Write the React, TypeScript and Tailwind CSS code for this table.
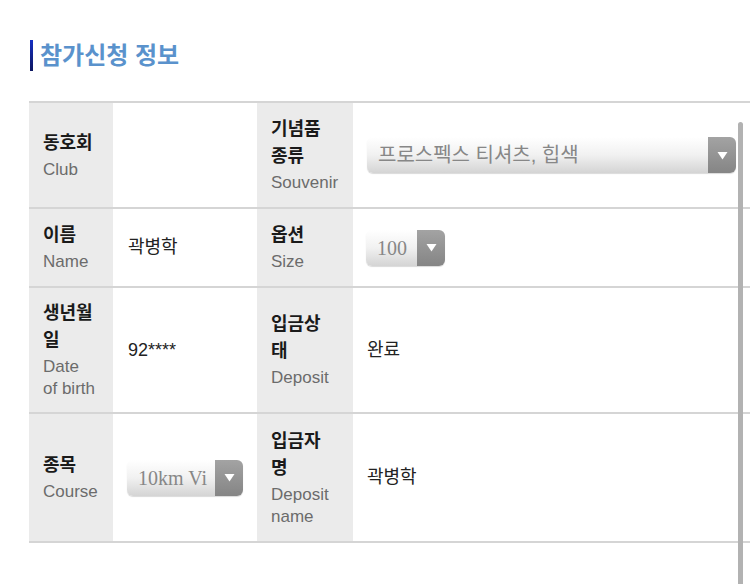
import React from "react";

const ko = { fontFamily: '"Liberation Sans", "Noto Sans CJK KR", sans-serif' };

function Label({ lines, en }: { lines: string[]; en: string[] }) {
  return (
    <div className="flex flex-col justify-center bg-[#ebebeb] pl-[14px] pr-[10px] border-b-2 border-[#d5d5d5] whitespace-nowrap">
      {lines.map((l) => (
        <div key={l} className="text-[18px] leading-[27px] font-bold text-[#1a1a1a]">
          {l}
        </div>
      ))}
      <div className="mt-[2px]">
        {en.map((e) => (
          <div key={e} className="text-[17px] leading-[22px] text-[#6b6b6b]">
            {e}
          </div>
        ))}
      </div>
    </div>
  );
}

function Value({ children, pad = "pl-[15px]" }: { children?: React.ReactNode; pad?: string }) {
  return (
    <div className={`flex items-center ${pad} border-b-2 border-[#d5d5d5] text-[18px] text-[#222]`}>
      {children}
    </div>
  );
}

function Select({ text, width, serif }: { text: string; width: string; serif?: boolean }) {
  return (
    <div className={`flex h-[36px] ${width} rounded-[6px] overflow-hidden shadow-[0_1px_1px_rgba(0,0,0,0.15)]`}>
      <div
        className="flex-1 min-w-0 flex items-center pl-[11px] overflow-hidden whitespace-nowrap bg-gradient-to-b from-[#ffffff] via-[#f1f1f1] to-[#d4d4d4] text-[#878787] text-[20px]"
        style={serif ? { fontFamily: '"Liberation Serif", serif' } : undefined}
      >
        {text}
      </div>
      <div className="w-[28px] flex items-center justify-center bg-gradient-to-b from-[#a3a3a3] to-[#858585]">
        <svg width="11" height="9" viewBox="0 0 11 9">
          <path d="M0.5 1 L10.5 1 L5.5 8.5 Z" fill="#fff" />
        </svg>
      </div>
    </div>
  );
}

export default function App() {
  return (
    <div className="relative w-[750px] h-[584px] overflow-hidden bg-white" style={ko}>
      <div className="pt-[40px] pl-[30px] flex items-center gap-[7px]">
        <div className="w-[3px] h-[31px] bg-gradient-to-b from-[#1530c4] to-[#0c1660]" />
        <h2 className="text-[24px] leading-[30px] font-bold text-[#5a92cc]">참가신청 정보</h2>
      </div>

      <div className="ml-[29px] mt-[30px] w-[760px] border-t-2 border-[#d5d5d5] grid grid-cols-[84px_144px_96px_1fr] grid-rows-[106px_79px_126px_129px]">
        <Label lines={["동호회"]} en={["Club"]} />
        <Value />
        <Label lines={["기념품", "종류"]} en={["Souvenir"]} />
        <Value pad="pl-[14px]">
          <Select text="프로스펙스 티셔츠, 힙색" width="w-[369px]" />
        </Value>

        <Label lines={["이름"]} en={["Name"]} />
        <Value>곽병학</Value>
        <Label lines={["옵션"]} en={["Size"]} />
        <Value pad="pl-[13px]">
          <Select text="100" width="w-[79px]" serif />
        </Value>

        <Label lines={["생년월", "일"]} en={["Date", "of birth"]} />
        <Value>92****</Value>
        <Label lines={["입금상", "태"]} en={["Deposit"]} />
        <Value pad="pl-[14px]">완료</Value>

        <Label lines={["종목"]} en={["Course"]} />
        <Value pad="pl-[14px]">
          <Select text="10km Vi" width="w-[116px]" serif />
        </Value>
        <Label lines={["입금자", "명"]} en={["Deposit", "name"]} />
        <Value pad="pl-[14px]">곽병학</Value>
      </div>

      <div className="absolute left-[738px] top-[122px] w-[5px] h-[470px] rounded-full bg-[#b2b2b2]" />
    </div>
  );
}
